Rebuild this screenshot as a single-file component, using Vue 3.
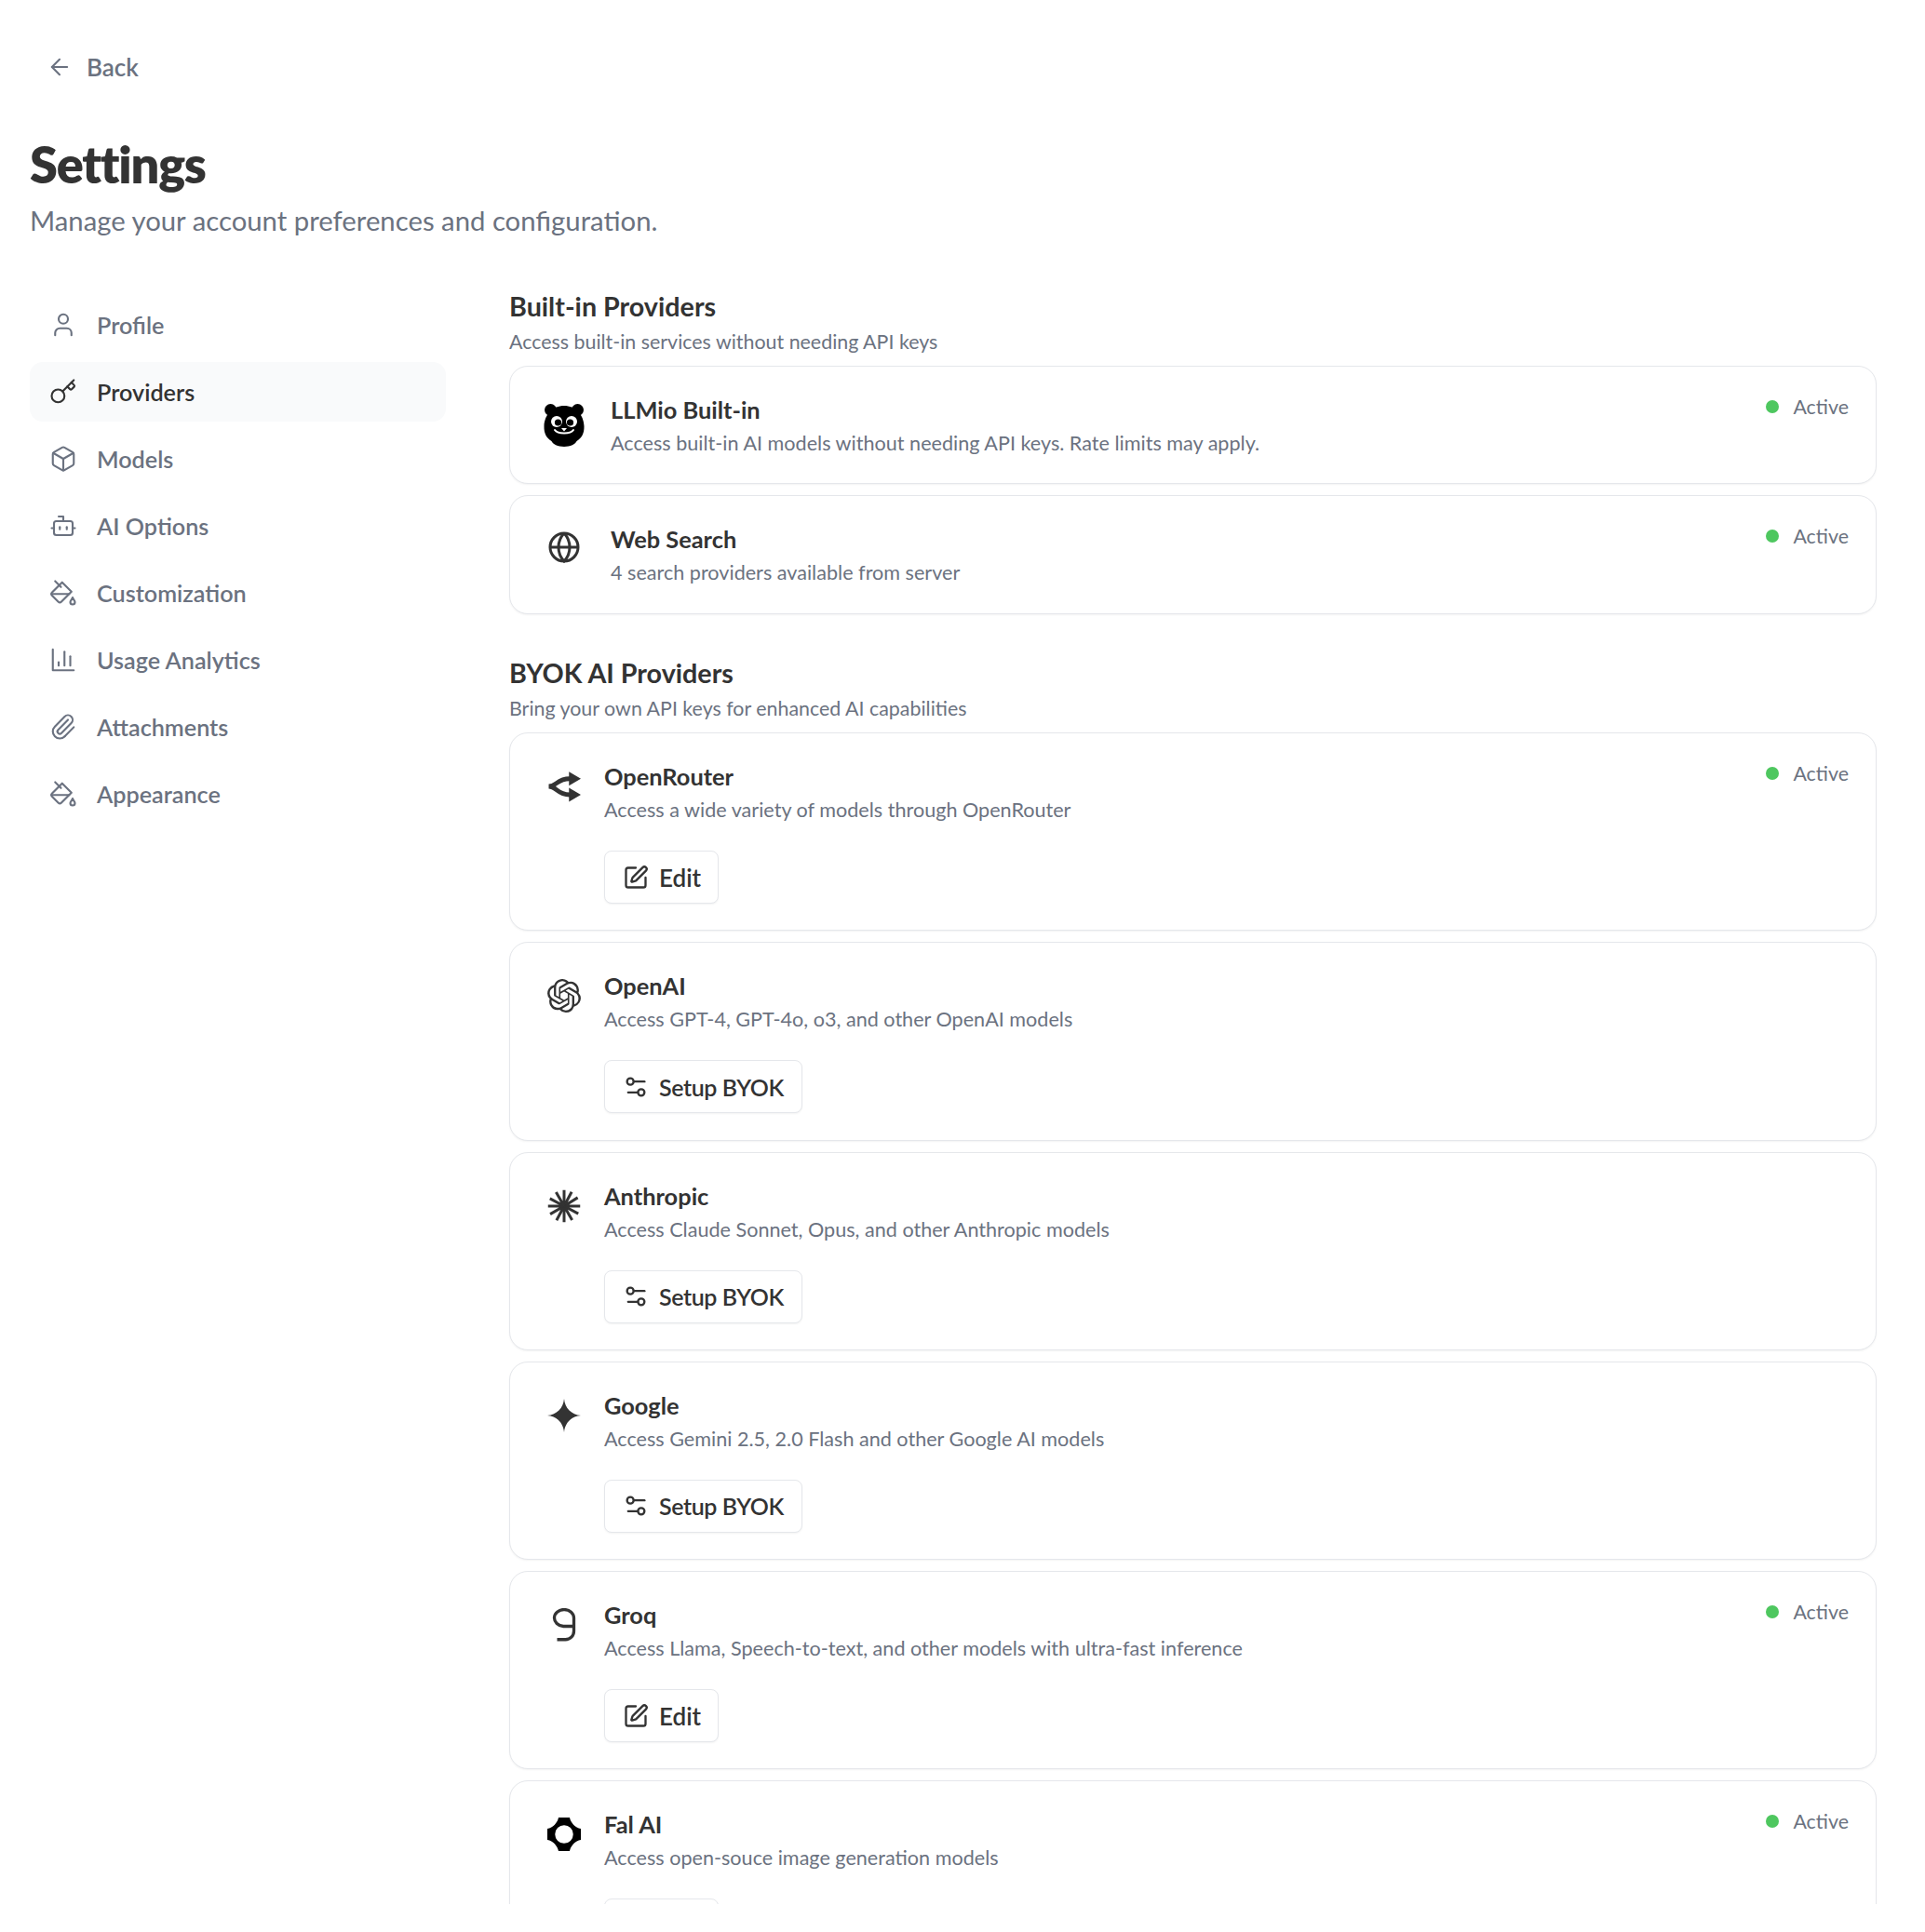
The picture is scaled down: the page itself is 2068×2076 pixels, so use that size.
<script setup>
const navItems = [
  { label: 'Profile', icon: 'user' },
  { label: 'Providers', icon: 'key', active: true },
  { label: 'Models', icon: 'box' },
  { label: 'AI Options', icon: 'bot' },
  { label: 'Customization', icon: 'bucket' },
  { label: 'Usage Analytics', icon: 'chart' },
  { label: 'Attachments', icon: 'clip' },
  { label: 'Appearance', icon: 'bucket' },
]

const builtIn = [
  { name: 'LLMio Built-in', desc: 'Access built-in AI models without needing API keys. Rate limits may apply.', logo: 'bear' },
  { name: 'Web Search', desc: '4 search providers available from server', logo: 'globe' },
]

const byok = [
  { name: 'OpenRouter', desc: 'Access a wide variety of models through OpenRouter', logo: 'openrouter', active: true },
  { name: 'OpenAI', desc: 'Access GPT-4, GPT-4o, o3, and other OpenAI models', logo: 'openai' },
  { name: 'Anthropic', desc: 'Access Claude Sonnet, Opus, and other Anthropic models', logo: 'anthropic' },
  { name: 'Google', desc: 'Access Gemini 2.5, 2.0 Flash and other Google AI models', logo: 'google' },
  { name: 'Groq', desc: 'Access Llama, Speech-to-text, and other models with ultra-fast inference', logo: 'groq', active: true },
  { name: 'Fal AI', desc: 'Access open-souce image generation models', logo: 'fal', active: true },
]

const rays = [0, 28, 58, 90, 118, 150, 180, 208, 240, 270, 298, 330]
</script>

<template>
  <div class="page">
    <a class="back">
      <svg class="ic-back" viewBox="0 0 24 24"><path d="m12 19-7-7 7-7" /><path d="M19 12H5" /></svg>
      Back
    </a>
    <h1>Settings</h1>
    <p class="lead">Manage your account preferences and configuration.</p>

    <div class="columns">
      <nav class="side">
        <a v-for="item in navItems" :key="item.label" class="nav-item" :class="{ active: item.active }">
          <svg class="ic-nav" viewBox="0 0 24 24">
            <template v-if="item.icon === 'user'">
              <path d="M19 21v-2a4 4 0 0 0-4-4H9a4 4 0 0 0-4 4v2" /><circle cx="12" cy="7" r="4" />
            </template>
            <template v-else-if="item.icon === 'key'">
              <path d="m15.5 7.5 2.3 2.3a1 1 0 0 0 1.4 0l2.1-2.1a1 1 0 0 0 0-1.4L19 4" /><path d="m21 2-9.6 9.6" /><circle cx="7.5" cy="15.5" r="5.5" />
            </template>
            <template v-else-if="item.icon === 'box'">
              <path d="M21 8a2 2 0 0 0-1-1.73l-7-4a2 2 0 0 0-2 0l-7 4A2 2 0 0 0 3 8v8a2 2 0 0 0 1 1.73l7 4a2 2 0 0 0 2 0l7-4A2 2 0 0 0 21 16Z" /><path d="m3.3 7 8.7 5 8.7-5" /><path d="M12 22V12" />
            </template>
            <template v-else-if="item.icon === 'bot'">
              <path d="M12 8V4H8" /><rect width="16" height="12" x="4" y="8" rx="2" /><path d="M2 14h2" /><path d="M20 14h2" /><path d="M15 13v2" /><path d="M9 13v2" />
            </template>
            <template v-else-if="item.icon === 'bucket'">
              <path d="m19 11-8-8-8.6 8.6a2 2 0 0 0 0 2.8l5.2 5.2c.8.8 2 .8 2.8 0L19 11Z" /><path d="m5 2 5 5" /><path d="M2 13h15" /><path d="M22 20a2 2 0 1 1-4 0c0-1.6 1.7-2.4 2-4 .3 1.6 2 2.4 2 4Z" />
            </template>
            <template v-else-if="item.icon === 'chart'">
              <path d="M3 3v18h18" /><path d="M18 17V9" /><path d="M13 17V5" /><path d="M8 17v-3" />
            </template>
            <template v-else>
              <path d="M13.234 20.252 21 12.3" /><path d="m16 6-8.414 8.586a2 2 0 0 0 0 2.828 2 2 0 0 0 2.828 0l8.414-8.586a4 4 0 0 0 0-5.656 4 4 0 0 0-5.656 0l-8.415 8.585a6 6 0 1 0 8.486 8.486" />
            </template>
          </svg>
          {{ item.label }}
        </a>
      </nav>

      <main class="content">
        <section class="group">
          <h2>Built-in Providers</h2>
          <p class="sub">Access built-in services without needing API keys</p>
          <div class="cards">
            <article v-for="p in builtIn" :key="p.name" class="card card-short">
              <div class="logo logo-mid">
                <svg v-if="p.logo === 'bear'" class="bear" viewBox="0 0 44 48">
                  <circle cx="7.5" cy="7.5" r="6.5" fill="#000" />
                  <circle cx="36.5" cy="7.5" r="6.5" fill="#000" />
                  <path d="M22 3C10 3 1 12 .5 25c-.3 8 3 13 8 16 1 3 7 6 13.500 6s12.500-3 13.500-6c5-3 8.300-8 8-16C43 12 34 3 22 3Z" fill="#000" />
                  <circle cx="14" cy="20" r="6" fill="#fff" />
                  <circle cx="30" cy="20" r="6" fill="#fff" />
                  <circle cx="15.500" cy="21" r="3.600" fill="#000" />
                  <circle cx="28.500" cy="21" r="3.600" fill="#000" />
                  <path d="M12 29c2 3 6 3.500 10 3.500s8-.5 10-3.500" fill="none" stroke="#fff" stroke-width="2" stroke-linecap="round" />
                  <path d="M19 27h6l-3 3.500Z" fill="#fff" />
                </svg>
                <svg v-else class="globe" viewBox="0 0 24 24">
                  <circle cx="12" cy="12" r="10" /><path d="M12 2a14.500 14.500 0 0 0 0 20 14.500 14.500 0 0 0 0-20" /><path d="M2 12h20" />
                </svg>
              </div>
              <div class="body body-wide">
                <h3>{{ p.name }}</h3>
                <p class="desc">{{ p.desc }}</p>
              </div>
              <div class="status"><i class="dot"></i>Active</div>
            </article>
          </div>
        </section>

        <section class="group">
          <h2>BYOK AI Providers</h2>
          <p class="sub">Bring your own API keys for enhanced AI capabilities</p>
          <div class="cards">
            <article v-for="p in byok" :key="p.name" class="card card-tall">
              <div class="logo logo-top">
                <svg v-if="p.logo === 'openrouter'" class="brand" viewBox="0 0 24 24">
                  <path d="M1 12c5.500 0 6-5.500 15-5.500M1 12c5.500 0 6 6 15 6" fill="none" stroke="#333" stroke-width="3.200" />
                  <path d="M24 6.500 15.500 1.500v10ZM24 18l-8.500-5v10Z" fill="#333" />
                </svg>
                <svg v-else-if="p.logo === 'openai'" class="brand" viewBox="0 0 24 24">
                  <path fill="#333" d="M22.2819 9.8211a5.9847 5.9847 0 0 0-.5157-4.9108 6.0462 6.0462 0 0 0-6.5098-2.9A6.0651 6.0651 0 0 0 4.9807 4.1818a5.9847 5.9847 0 0 0-3.9977 2.9 6.0462 6.0462 0 0 0 .7427 7.0966 5.98 5.98 0 0 0 .511 4.9107 6.051 6.051 0 0 0 6.5146 2.9001A5.9847 5.9847 0 0 0 13.2599 24a6.0557 6.0557 0 0 0 5.7718-4.2058 5.9894 5.9894 0 0 0 3.9977-2.9001 6.0557 6.0557 0 0 0-.7475-7.0729zm-9.022 12.6081a4.4755 4.4755 0 0 1-2.8764-1.0408l.1419-.0804 4.7783-2.7582a.7948.7948 0 0 0 .3927-.6813v-6.7369l2.02 1.1686a.071.071 0 0 1 .038.052v5.5826a4.504 4.504 0 0 1-4.4945 4.4944zm-9.6607-4.1254a4.4708 4.4708 0 0 1-.5346-3.0137l.142.0852 4.783 2.7582a.7712.7712 0 0 0 .7806 0l5.8428-3.3685v2.3324a.0804.0804 0 0 1-.0332.0615L9.74 19.9502a4.4992 4.4992 0 0 1-6.1408-1.6464zM2.3408 7.8956a4.485 4.485 0 0 1 2.3655-1.9728V11.6a.7664.7664 0 0 0 .3879.6765l5.8144 3.3543-2.0201 1.1685a.0757.0757 0 0 1-.071 0l-4.8303-2.7865A4.504 4.504 0 0 1 2.3408 7.872zm16.5963 3.8558L13.1038 8.364 15.1192 7.2a.0757.0757 0 0 1 .071 0l4.8303 2.7913a4.4944 4.4944 0 0 1-.6765 8.1042v-5.6772a.79.79 0 0 0-.407-.667zm2.0107-3.0231l-.142-.0852-4.7735-2.7818a.7759.7759 0 0 0-.7854 0L9.409 9.2297V6.8974a.0662.0662 0 0 1 .0284-.0615l4.8303-2.7866a4.4992 4.4992 0 0 1 6.6802 4.66zM8.3065 12.863l-2.02-1.1638a.0804.0804 0 0 1-.038-.0567V6.0742a4.4992 4.4992 0 0 1 7.3757-3.4537l-.142.0805L8.704 5.459a.7948.7948 0 0 0-.3927.6813zm1.0976-2.3654l2.602-1.4998 2.6069 1.4998v2.9994l-2.5974 1.4997-2.6067-1.4997Z" />
                </svg>
                <svg v-else-if="p.logo === 'anthropic'" class="brand" viewBox="0 0 24 24">
                  <circle cx="12" cy="12" r="4" fill="#333" />
                  <path v-for="a in rays" :key="a" d="M12 12V0.500" stroke="#333" stroke-width="2" :transform="`rotate(${a} 12 12)`" />
                </svg>
                <svg v-else-if="p.logo === 'google'" class="brand" viewBox="0 0 24 24">
                  <path fill="#333" d="M12 0c.6 6.800 5.200 11.400 12 12-6.800.6-11.400 5.200-12 12-.6-6.800-5.200-11.400-12-12C6.800 11.400 11.400 6.800 12 0Z" />
                </svg>
                <svg v-else-if="p.logo === 'groq'" class="brand" viewBox="0 0 24 24">
                  <path d="M19 13H11.500a7 6 0 1 1 7.500-6v9.500a6 6 0 0 1-6 6H7" fill="none" stroke="#333" stroke-width="2.200" />
                </svg>
                <svg v-else class="brand" viewBox="0 0 24 24">
                  <path fill-rule="evenodd" d="M8 0h8c.6 3.500 4 7.400 8 8v8c-4 .6-7.400 4.500-8 8H8c-.6-3.500-4-7.400-8-8V8c4-.6 7.400-4.500 8-8Zm4 5.500a6.500 6.500 0 1 0 0 13 6.500 6.500 0 0 0 0-13Z" fill="#000" />
                </svg>
              </div>
              <div class="body">
                <h3>{{ p.name }}</h3>
                <p class="desc">{{ p.desc }}</p>
                <button class="action" :class="{ setup: !p.active }">
                  <svg v-if="p.active" class="ic-btn" viewBox="0 0 24 24">
                    <path d="M12 3H5a2 2 0 0 0-2 2v14a2 2 0 0 0 2 2h14a2 2 0 0 0 2-2v-7" /><path d="M18.375 2.625a1 1 0 0 1 3 3l-9.013 9.014a2 2 0 0 1-.853.505l-2.873.84a.5.5 0 0 1-.62-.62l.84-2.873a2 2 0 0 1 .506-.852z" />
                  </svg>
                  <svg v-else class="ic-btn" viewBox="0 0 24 24">
                    <path d="M20 7h-9" /><path d="M14 17H5" /><circle cx="17" cy="17" r="3" /><circle cx="7" cy="7" r="3" />
                  </svg>
                  {{ p.active ? 'Edit' : 'Setup BYOK' }}
                </button>
              </div>
              <div v-if="p.active" class="status"><i class="dot"></i>Active</div>
            </article>
          </div>
        </section>
      </main>
    </div>
  </div>
</template>

<style scoped>
.page {
  height: 2046px;
  overflow: hidden;
  box-sizing: border-box;
  padding: 56px 52px 0 32px;
  background: #fff;
  font-family: Lato, "Noto Sans", sans-serif;
  color: #333;
}

svg {
  display: block;
  flex-shrink: 0;
}

.back {
  display: flex;
  align-items: center;
  gap: 15px;
  height: 32px;
  padding-left: 18px;
  color: #6b7280;
  font-size: 26px;
  font-weight: 600;
}

.ic-back {
  width: 28px;
  height: 28px;
  fill: none;
  stroke: #6b7280;
  stroke-width: 1.8;
  stroke-linecap: round;
  stroke-linejoin: round;
}

h1 {
  margin: 57px 0 0;
  font-size: 54px;
  line-height: 64px;
  font-weight: 800;
  letter-spacing: -1.2px;
  color: #333;
}

.lead {
  margin: 10px 0 0;
  font-size: 29.3px;
  line-height: 36px;
  color: #6b7280;
}

.columns {
  display: flex;
  gap: 68px;
  margin-top: 57px;
}

.side {
  display: flex;
  flex-direction: column;
  gap: 8px;
  width: 447px;
  flex-shrink: 0;
  margin-top: 5px;
}

.nav-item {
  display: flex;
  align-items: center;
  gap: 21px;
  height: 64px;
  padding-left: 21px;
  border-radius: 14px;
  color: #6b7280;
  font-size: 25.2px;
  font-weight: 600;
}

.nav-item.active {
  background: #f9fafb;
  color: #333;
}

.ic-nav {
  width: 30px;
  height: 30px;
  fill: none;
  stroke: currentColor;
  stroke-width: 1.7;
  stroke-linecap: round;
  stroke-linejoin: round;
}

.content {
  flex: 1;
  min-width: 0;
}

.group + .group {
  margin-top: 46.5px;
}

h2 {
  margin: -1px 0 0;
  font-size: 28.7px;
  line-height: 36px;
  font-weight: 700;
  color: #333;
}

.sub {
  margin: 6px 0 0;
  font-size: 21.4px;
  line-height: 28px;
  color: #6b7280;
}

.cards {
  display: flex;
  flex-direction: column;
  gap: 12px;
  margin-top: 12px;
}

.card {
  display: flex;
  align-items: flex-start;
  box-sizing: border-box;
  padding: 30px 29px 0 30px;
  border: 1px solid #e5e7eb;
  border-radius: 20px;
  background: #fff;
  box-shadow: 0 1px 2px rgba(0, 0, 0, 0.05);
}

.card-short {
  height: 127.4px;
}

.card-tall {
  height: 213.2px;
}

.logo {
  display: flex;
  justify-content: center;
  width: 56px;
  flex-shrink: 0;
}

.logo-mid {
  margin-top: 7px;
  margin-right: 22px;
}

.logo-top {
  margin-top: 9px;
  margin-right: 15px;
}

.bear {
  width: 44px;
  height: 48px;
  margin-top: 2px;
}

.globe {
  width: 36px;
  height: 36px;
  fill: none;
  stroke: #333;
  stroke-width: 2;
}

.brand {
  width: 36px;
  height: 36px;
}

.body {
  flex: 1;
  min-width: 0;
}

h3 {
  margin: 0;
  font-size: 25.4px;
  line-height: 32px;
  font-weight: 700;
  color: #333;
}

.desc {
  margin: 6px 0 0;
  font-size: 21.6px;
  line-height: 28px;
  color: #6b7280;
}

.action {
  display: flex;
  align-items: center;
  gap: 11px;
  height: 57px;
  margin-top: 30px;
  padding: 0 18px 0 19px;
  border: 1px solid #e5e7eb;
  border-radius: 8px;
  background: #fff;
  box-shadow: 0 1px 2px rgba(0, 0, 0, 0.05);
  font-family: inherit;
  font-size: 26px;
  font-weight: 600;
  color: #333;
}

.action.setup {
  padding-right: 19px;
  font-size: 25px;
  letter-spacing: -0.4px;
}

.ic-btn {
  width: 28px;
  height: 28px;
  fill: none;
  stroke: #333;
  stroke-width: 2;
  stroke-linecap: round;
  stroke-linejoin: round;
}

.status {
  display: flex;
  align-items: center;
  gap: 15px;
  height: 28px;
  margin-top: -1px;
  font-size: 21.4px;
  color: #6b7280;
}

.dot {
  width: 14px;
  height: 14px;
  border-radius: 50%;
  background: #4ec75f;
}
</style>
